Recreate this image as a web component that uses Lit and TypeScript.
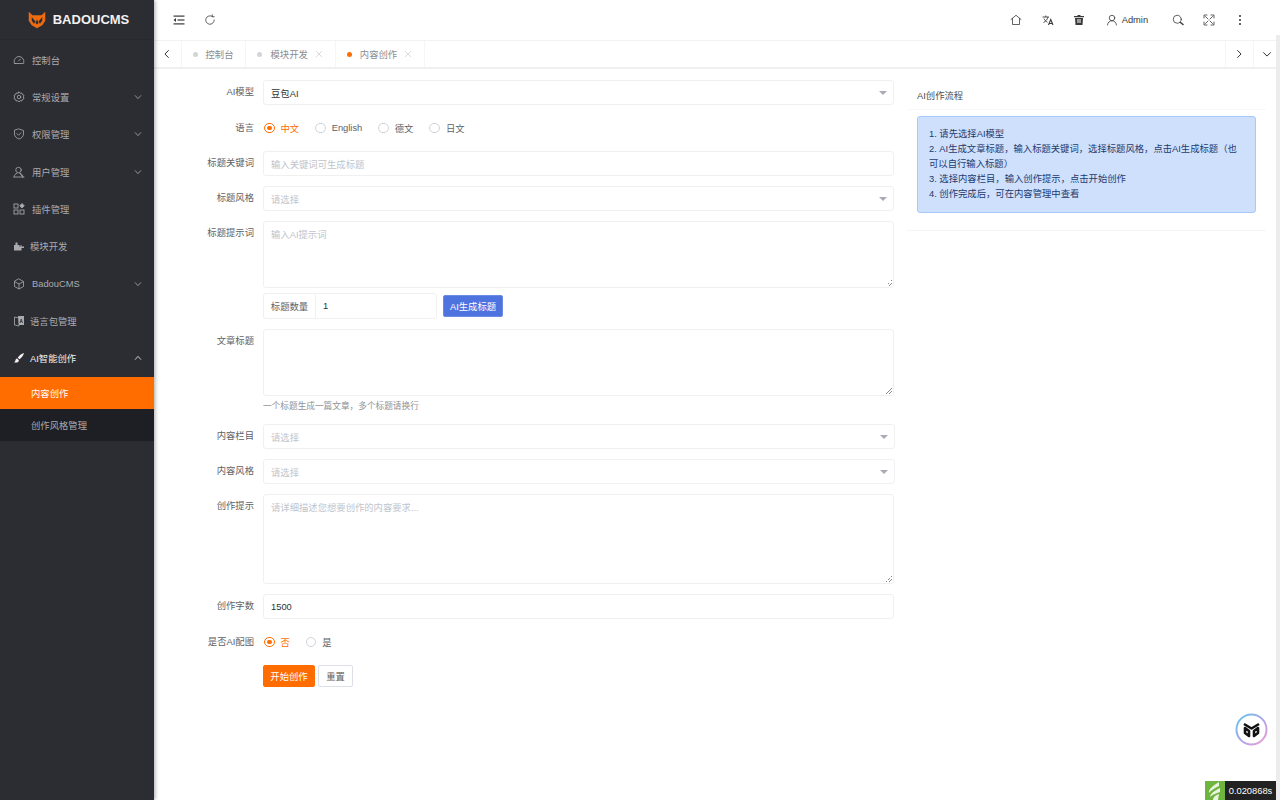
import { html, css, svg, LitElement } from 'lit';
import { customElement } from 'lit/decorators.js';

const line = (body: unknown, size = 12) => html`<svg class="ic" width="${size}" height="${size}" viewBox="0 0 24 24" fill="none" stroke="currentColor" stroke-width="1.6" stroke-linecap="round" stroke-linejoin="round">${body}</svg>`;
const solid = (body: unknown, size = 12) => html`<svg class="ic" width="${size}" height="${size}" viewBox="0 0 24 24" fill="currentColor">${body}</svg>`;

const icons: Record<string, () => unknown> = {
    gauge: () => line(svg`<path d="M4 19h16a1.5 1.5 0 0 0 1.5-2A10 10 0 0 0 12 5 10 10 0 0 0 2.5 17 1.500 1.500 0 0 0 4 19z"/><path d="M11 14l4-4"/>`),
    gear: () => line(svg`<circle cx="12" cy="12" r="3.500"/><path d="M12 2l2.300 2.600 3.400-.6 1.100 3.300 3.200 1.300-1.200 3.400 1.200 3.400-3.200 1.300-1.100 3.300-3.400-.6L12 22l-2.300-2.600-3.400.6-1.100-3.300-3.200-1.300 1.200-3.400-1.200-3.400 3.200-1.300L6.300 4l3.400.6z"/>`),
    shield: () => line(svg`<path d="M12 2l9 3v7c0 5-4 8.500-9 10-5-1.500-9-5-9-10V5z"/><path d="M8 11.500l3 3 5-5"/>`),
    user: () => line(svg`<circle cx="11" cy="8" r="5.500"/><path d="M2 22c.5-4 2.500-6.500 6-7.500M14 14.500c3.500 1 5.500 3.500 6 7.500z"/><path d="M2 22h20"/>`),
    plugin: () => html`<svg class="ic" width="12" height="12" viewBox="0 0 24 24" fill="none" stroke="currentColor" stroke-width="1.7"><rect x="2" y="2" width="8" height="8"/><rect x="2" y="14" width="8" height="8"/><rect x="14" y="14" width="8" height="8"/><path d="M18 1l4.500 4.500L18 10l-4.500-4.500z" fill="currentColor"/></svg>`,
    module: () => solid(svg`<path d="M2 21V10h3V5h4v5h4v3h2V10h2v3h5v3h-5v5H2z"/>`),
    box: () => line(svg`<path d="M12 2l9 5v10l-9 5-9-5V7z"/><path d="M3.500 7.500L12 12l8.500-4.500M12 12v9.500"/>`),
    lang: () => html`<svg class="ic" width="12" height="12" viewBox="0 0 24 24"><path d="M3 4l9 2v16l-9-2z" fill="none" stroke="currentColor" stroke-width="1.600"/><path d="M10 2h12v18H12z" fill="currentColor"/><path d="M14 16l2.500-8 2.500 8M15 13h3" fill="none" stroke="#2c2d33" stroke-width="1.500"/></svg>`,
    brush: () => solid(svg`<path d="M22 2c-5 1-10 5-12.500 9.500l3.500 3C17 12 21 7 22 2z"/><path d="M8.500 13C5 13 5 16 4.500 18c-.3 1.200-1.500 2-2.500 2.500 3.500 1.500 9 1 9.800-4.200z"/>`),
    outdent: () => html`<svg class="ic" width="12" height="12" viewBox="0 0 24 24" fill="currentColor"><rect x="1" y="3" width="22" height="2.400"/><rect x="9" y="10.800" width="14" height="2.400"/><rect x="1" y="18.600" width="22" height="2.400"/><path d="M6 8v8l-5-4z"/></svg>`,
    refresh: () => line(svg`<path d="M20.500 12a8.500 8.500 0 1 1-4-7.200"/><path d="M16.500 1.500v4h4" />`),
    home: () => line(svg`<path d="M2 11L12 2.500 22 11M5 9v12h14V9"/>`),
    translate: () => html`<svg class="ic" width="12" height="12" viewBox="0 0 24 24" fill="none" stroke="currentColor" stroke-width="1.800"><path d="M1 6h13M7.500 3v3M12 6c-1 5-5 9-9 11M4 9c1 3 4 6 7 7.500"/><path d="M13 22l4.500-11L22 22M14.500 19h6" stroke-width="2.200"/></svg>`,
    trash: () => html`<svg class="ic" width="12" height="12" viewBox="0 0 24 24" fill="currentColor"><path d="M9 2h6v2h7v2.500H2V4h7z"/><path d="M4 8h16l-1 14H5zm4 3v2h8v-2zm0 4v2h8v-2z" fill-rule="evenodd"/></svg>`,
    person: () => line(svg`<circle cx="12" cy="8" r="5.500"/><path d="M3 22c.5-5 4-8.500 9-8.500s8.500 3.500 9 8.500"/>`),
    search: () => line(svg`<circle cx="10.500" cy="10.500" r="8"/><path d="M17 17l5 4" stroke-width="3"/>`),
    shrink: () => line(svg`<path d="M2 8V2h6M22 8V2h-6M2 16v6h6M22 16v6h-6" stroke-dasharray="0"/><path d="M10 10L5 5M14 10l5-5M10 14l-5 5M14 14l5 5"/>`),
};

const chevron = (up = false) => html`<svg class="chev" width="8" height="8" viewBox="0 0 12 12" fill="none" stroke="currentColor" stroke-width="1.200"><path d="${up ? 'M1.500 8.500L6 3.500l4.500 5' : 'M1.500 3.500L6 8.500l4.500-5'}"/></svg>`;

const menu = [
    { label: '控制台', icon: 'gauge' },
    { label: '常规设置', icon: 'gear', more: true },
    { label: '权限管理', icon: 'shield', more: true },
    { label: '用户管理', icon: 'user', more: true },
    { label: '插件管理', icon: 'plugin' },
    { label: '模块开发', icon: 'module', tight: true },
    { label: 'BadouCMS', icon: 'box', more: true },
    { label: '语言包管理', icon: 'lang', tight: true },
];

@customElement('app-root')
export class AppRoot extends LitElement {
    static styles = css`
    :host {
        display: flex;
        width: 1280px;
        height: 800px;
        overflow: hidden;
        position: relative;
        background: #fff;
        font-family: "Liberation Sans", "Noto Sans CJK SC", sans-serif;
        font-size: 9.33px;
        color: #606266;
    }
    svg { display: block; flex: none; }

    .side {
        width: 154px;
        flex: none;
        background: #2c2d33;
        color: #a9abb0;
        box-shadow: 1px 0 4px rgba(0, 0, 0, .35);
        z-index: 2;
    }
    .logo {
        height: 39px;
        display: flex;
        align-items: center;
        justify-content: center;
        gap: 7px;
        padding-left: 3px;
        color: #f2f2f2;
        font-size: 13px;
        font-weight: 700;
        border-bottom: 1px solid #28292e;
        margin-bottom: 1px;
    }
    .item {
        height: 37.33px;
        display: flex;
        align-items: center;
        padding-left: 13px;
        gap: 7px;
    }
    .item.tight { gap: 5px; }
    .item .label { flex: 1; }
    .chev { margin-right: 12px; }
    .item.open { color: #f2f2f2; }
    .sub {
        height: 32px;
        display: flex;
        align-items: center;
        padding-left: 31px;
        background: #1e1f24;
    }
    .sub.on {
        background: #ff6d00;
        color: #fff;
    }

    .main {
        flex: 1;
        min-width: 0;
        display: flex;
        flex-direction: column;
    }
    .head {
        height: 40px;
        flex: none;
        display: flex;
        align-items: center;
        padding: 0 24px 0 19px;
        color: #3a3a3a;
        border-bottom: 1px solid #f2f2f2;
    }
    .head-left { display: flex; gap: 19px; flex: 1; }
    .head-right { display: flex; align-items: center; }
    .tool { width: 31.300px; display: flex; justify-content: center; }
    .tool.admin { width: auto; gap: 4px; padding: 0 14px 0 11px; align-items: center; }
    .dots { display: flex; flex-direction: column; gap: 2px; }
    .dots i { width: 2px; height: 2px; border-radius: 50%; background: #333; }

    .tabs {
        height: 26px;
        flex: none;
        display: flex;
        align-items: stretch;
        border-bottom: 2px solid #f0f0f0;
        color: #8a8c90;
    }
    .tab-btn {
        width: 26.500px;
        display: flex;
        align-items: center;
        justify-content: center;
        color: #333;
        border-right: 1px solid #f5f5f5;
    }
    .tab-btn.end { border-right: 0; border-left: 1px solid #f5f5f5; }
    .tab {
        display: flex;
        align-items: center;
        padding: 0 12px 0 11px;
        border-right: 1px solid #f5f5f5;
    }
    .tab i {
        width: 5px;
        height: 5px;
        border-radius: 50%;
        background: #d4d4d4;
        margin-right: 8px;
    }
    .tab.on i { background: #ff6d00; }
    .tab .x { margin-left: 7px; color: #c8c8c8; }
    .tabs .grow { flex: 1; }

    .body {
        flex: 1;
        display: flex;
        min-height: 0;
    }
    form {
        width: 741px;
        flex: none;
        padding-top: 11px;
    }
    .row {
        display: grid;
        grid-template-columns: 100px 631px;
        column-gap: 9px;
        margin-bottom: 10px;
    }
    .row > label {
        text-align: right;
        line-height: 25px;
    }
    .row.radio-row > label { line-height: 26px; }
    .row.tall > label { line-height: 25px; padding-top: 0; }
    .box {
        box-sizing: border-box;
        height: 25px;
        border: 1px solid #f0f0f0;
        border-radius: 3px;
        display: flex;
        align-items: center;
        padding: 0 7px;
        color: #303133;
        position: relative;
    }
    .box.ph { color: #c0c4cc; }
    .box.wide { width: 632px; }
    .area {
        height: 67px;
        align-items: flex-start;
        padding-top: 5px;
    }
    .area.h90 { height: 90px; }
    .area::after {
        content: "";
        position: absolute;
        right: 1px;
        bottom: 1px;
        width: 6px;
        height: 6px;
        background: linear-gradient(135deg, transparent 50%, #8a8a8a 50%, #8a8a8a 58%, transparent 58%, transparent 72%, #8a8a8a 72%, #8a8a8a 80%, transparent 80%);
    }
    .caret {
        position: absolute;
        right: 6px;
        top: 10px;
        width: 0;
        height: 0;
        border-left: 4px solid transparent;
        border-right: 4px solid transparent;
        border-top: 4px solid #a8abb2;
    }
    .radios {
        height: 26px;
        display: flex;
        align-items: center;
        padding-left: 1px;
    }
    .radio {
        display: flex;
        align-items: center;
        gap: 6px;
        margin-right: 16px;
    }
    .radio i {
        box-sizing: border-box;
        width: 10.500px;
        height: 10.500px;
        border-radius: 50%;
        border: 1px solid #d0d3d9;
        display: flex;
        align-items: center;
        justify-content: center;
    }
    .radio.on { color: #ff6d00; }
    .radio.on i { border-color: #ff6d00; }
    .radio.on i::after {
        content: "";
        width: 4.500px;
        height: 4.500px;
        border-radius: 50%;
        background: #ff6d00;
    }
    .count {
        display: flex;
        align-items: center;
        margin: -5px 0 0;
        grid-column: 2;
    }
    .addon {
        box-sizing: border-box;
        height: 26px;
        width: 52px;
        border: 1px solid #f0f0f0;
        border-right: 0;
        border-radius: 3px 0 0 3px;
        display: flex;
        align-items: center;
        justify-content: center;
    }
    .count .box {
        width: 122px;
        height: 26px;
        border-radius: 0 3px 3px 0;
    }
    .btn {
        box-sizing: border-box;
        height: 21.500px;
        display: flex;
        align-items: center;
        justify-content: center;
        border-radius: 2px;
        border: 1px solid #dcdfe6;
    }
    .btn.blue {
        width: 60px;
        margin-left: 6px;
        background: #4e73df;
        border-color: #6a8ae6;
        color: #fff;
    }
    .btn.orange {
        width: 52px;
        background: #ff6d00;
        border-color: #ff6d00;
        color: #fff;
    }
    .btn.plain { width: 35px; margin-left: 3px; }
    .hint {
        color: #909399;
        font-size: 8.670px;
        line-height: 21px;
        height: 18px;
    }
    .actions { display: flex; }

    .card {
        box-sizing: border-box;
        width: 359px;
        height: 151px;
        margin: 11px 0 0 12px;
        border-bottom: 1px solid #f5f5f5;
    }
    .card-title {
        height: 29px;
        display: flex;
        align-items: center;
        padding-left: 10px;
        border-bottom: 1px solid #f8f8f8;
        margin-bottom: 6px;
        color: #4a4c50;
        padding-top: 0;
    }
    .alert {
        box-sizing: border-box;
        margin: 0 10px;
        height: 97px;
        padding: 10px 11px;
        background: #cfe0fd;
        border: 1px solid #a6c8ff;
        border-radius: 3px;
        color: #1e3a6e;
        line-height: 15px;
    }

    .scroll {
        position: absolute;
        right: 0;
        top: 35px;
        bottom: 0;
        width: 4px;
        background: #ececec;
    }
    .fab {
        position: absolute;
        left: 1235px;
        top: 713px;
        width: 33px;
        height: 33px;
    }
    .trace {
        position: absolute;
        left: 1205px;
        bottom: 0;
        height: 19px;
        display: flex;
    }
    .trace-logo { width: 20px; height: 19px; }
    .trace-time {
        width: 51px;
        background: #222;
        color: #fff;
        font-size: 9.33px;
        display: flex;
        align-items: center;
        justify-content: center;
    }
  `;

    private row(label: string, body: unknown, cls = '') {
        return html`<div class="row ${cls}"><label>${label}</label>${body}</div>`;
    }

    private select(text: string, ph = true, wide = false) {
        return html`<div class="box ${ph ? 'ph' : ''} ${wide ? 'wide' : ''}">${text}<span class="caret"></span></div>`;
    }

    private radios(list: string[]) {
        return html`<div class="radios">${list.map((t, i) => html`<span class="radio ${i === 0 ? 'on' : ''}"><i></i>${t}</span>`)}</div>`;
    }

    private renderSide() {
        return html`<aside class="side">
            <div class="logo">
                <svg width="18" height="18" viewBox="0 0 24 24">
                    <path d="M1 1l5 4.500h12L23 1v12l-4 6-7 4-7-4-4-6z" fill="#ee6c0f"/>
                    <path d="M5 8l5 6-2 3-3-4zM19 8l-5 6 2 3 3-4zM10 16l2 2 2-2-2-5z" fill="#2c2d33"/>
                </svg>
                BADOUCMS
            </div>
            ${menu.map((m) => html`<div class="item ${m.tight ? 'tight' : ''}">
                ${icons[m.icon]()}
                <span class="label">${m.label}</span>
                ${m.more ? chevron() : ''}
            </div>`)}
            <div class="item open tight">${icons.brush()}<span class="label">AI智能创作</span>${chevron(true)}</div>
            <div class="sub on">内容创作</div>
            <div class="sub">创作风格管理</div>
        </aside>`;
    }

    private renderHead() {
        return html`<header class="head">
            <div class="head-left">${icons.outdent()}${icons.refresh()}</div>
            <div class="head-right">
                <span class="tool">${icons.home()}</span>
                <span class="tool">${icons.translate()}</span>
                <span class="tool">${icons.trash()}</span>
                <span class="tool admin">${icons.person()}Admin</span>
                <span class="tool">${icons.search()}</span>
                <span class="tool">${icons.shrink()}</span>
                <span class="tool"><span class="dots"><i></i><i></i><i></i></span></span>
            </div>
        </header>`;
    }

    private renderTabs() {
        const close = html`<svg class="x" width="8" height="8" viewBox="0 0 12 12" fill="none" stroke="currentColor"><path d="M1.500 1.500l9 9M10.500 1.500l-9 9"/></svg>`;
        const arrow = (d: string) => html`<svg width="10" height="10" viewBox="0 0 12 12" fill="none" stroke="currentColor" stroke-width="1.200"><path d="${d}"/></svg>`;
        return html`<nav class="tabs">
            <div class="tab-btn">${arrow('M8 1.500L3.500 6 8 10.500')}</div>
            <div class="tab"><i></i>控制台</div>
            <div class="tab"><i></i>模块开发${close}</div>
            <div class="tab on"><i></i>内容创作${close}</div>
            <div class="grow"></div>
            <div class="tab-btn end">${arrow('M4 1.500L8.500 6 4 10.500')}</div>
            <div class="tab-btn end">${arrow('M1.500 4L6 8.500 10.500 4')}</div>
        </nav>`;
    }

    private renderForm() {
        return html`<form>
            ${this.row('AI模型', this.select('豆包AI', false))}
            ${this.row('语言', this.radios(['中文', 'English', '德文', '日文']), 'radio-row')}
            ${this.row('标题关键词', html`<div class="box ph">输入关键词可生成标题</div>`)}
            ${this.row('标题风格', this.select('请选择'))}
            ${this.row('标题提示词', html`<div class="box ph area">输入AI提示词</div>`, 'tall')}
            <div class="row">
                <div class="count">
                    <span class="addon">标题数量</span>
                    <div class="box">1</div>
                    <span class="btn blue">AI生成标题</span>
                </div>
            </div>
            <div class="row tall" style="margin-bottom:0">
                <label>文章标题</label>
                <div>
                    <div class="box area"></div>
                    <div class="hint">一个标题生成一篇文章，多个标题请换行</div>
                </div>
            </div>
            <div class="row" style="margin-top:10px"><label>内容栏目</label>${this.select('请选择', true, true)}</div>
            ${this.row('内容风格', this.select('请选择', true, true))}
            ${this.row('创作提示', html`<div class="box ph area h90">请详细描述您想要创作的内容要求...</div>`, 'tall')}
            ${this.row('创作字数', html`<div class="box">1500</div>`)}
            ${this.row('是否AI配图', this.radios(['否', '是']), 'radio-row')}
            <div class="row">
                <div class="actions" style="grid-column:2">
                    <span class="btn orange">开始创作</span>
                    <span class="btn plain">重置</span>
                </div>
            </div>
        </form>`;
    }

    private renderCard() {
        return html`<section class="card">
            <div class="card-title">AI创作流程</div>
            <div class="alert">
                1. 请先选择AI模型<br />
                2. AI生成文章标题，输入标题关键词，选择标题风格，点击AI生成标题（也可以自行输入标题）<br />
                3. 选择内容栏目，输入创作提示，点击开始创作<br />
                4. 创作完成后，可在内容管理中查看
            </div>
        </section>`;
    }

    render() {
        return html`
            ${this.renderSide()}
            <div class="main">
                ${this.renderHead()}
                ${this.renderTabs()}
                <div class="body">
                    ${this.renderForm()}
                    ${this.renderCard()}
                </div>
            </div>
            <div class="scroll"></div>
            <svg class="fab" viewBox="0 0 33 33">
                <defs>
                    <linearGradient id="ring" x1="0" y1="0" x2="1" y2="1">
                        <stop offset="0" stop-color="#5cc8ec"/>
                        <stop offset=".5" stop-color="#a9a6ee"/>
                        <stop offset="1" stop-color="#f29ad2"/>
                    </linearGradient>
                </defs>
                <circle cx="16.500" cy="16.500" r="15" fill="#fff" stroke="url(#ring)" stroke-width="2"/>
                <path d="M9 11l7.500 4.500L24 11M16.500 8.500l0 .1M10 15v5l4 3v-5zM23 15v5l-4 3v-5z" fill="none" stroke="#111" stroke-width="2.600" stroke-linejoin="round"/>
            </svg>
            <div class="trace">
                <svg class="trace-logo" viewBox="0 0 20 19">
                    <rect width="20" height="19" fill="#6fb43f"/>
                    <path d="M14 1C9 4 3 8 4 12c2-3 6-5 10-7zM15 7c-4 2-10 5-10 9 2-2 6-4 10-5zM14 13c-3 1-6 3-6 6h5z" fill="#e8f4dd"/>
                </svg>
                <span class="trace-time">0.020868s</span>
            </div>
        `;
    }
}

declare global {
    interface HTMLElementTagNameMap {
        'app-root': AppRoot;
    }
}
